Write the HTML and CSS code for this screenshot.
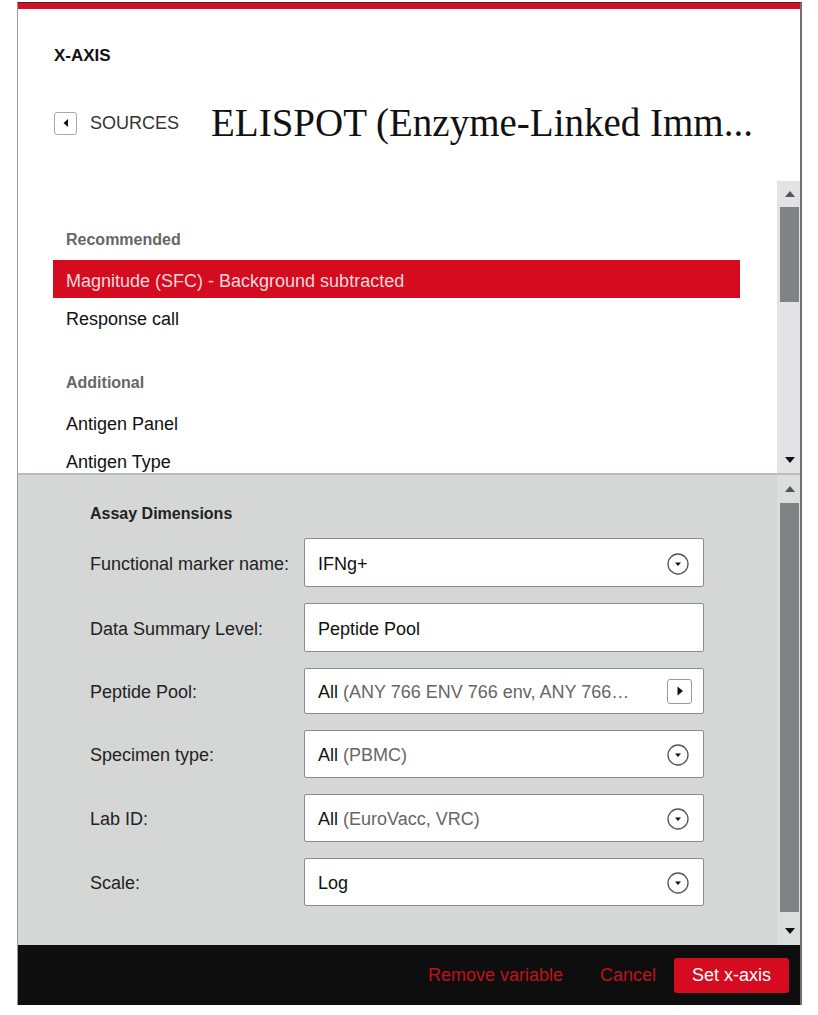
FILE: index.html
```html
<!DOCTYPE html>
<html>
<head>
<meta charset="utf-8">
<link rel="stylesheet" href="styles.css">
</head>
<body>
<div class="modal">
  <div class="redbar"></div>
  <div class="header">
    <div class="axis-title">X-AXIS</div>
    <div class="crumbs">
      <div class="back">
        <span class="backbox"><svg width="8" height="10" viewBox="0 0 8 10"><path d="M6 1 L1.5 5 L6 9 Z" fill="#111"/></svg></span>
        <span class="back-text">SOURCES</span>
      </div>
      <div class="source-title">ELISPOT (Enzyme-Linked Imm...</div>
    </div>
  </div>

  <div class="list-area">
    <div class="list">
      <div class="group">
        <div class="group-title">Recommended</div>
        <div class="item selected">Magnitude (SFC) - Background subtracted</div>
        <div class="item">Response call</div>
      </div>
      <div class="group">
        <div class="group-title">Additional</div>
        <div class="item">Antigen Panel</div>
        <div class="item">Antigen Type</div>
      </div>
    </div>
    <div class="scrollbar sb-upper">
      <div class="sb-btn"><span class="tri-up dim"></span></div>
      <div class="sb-track"><div class="sb-thumb"></div></div>
      <div class="sb-btn"><span class="tri-down"></span></div>
    </div>
  </div>

  <div class="dims-area">
    <div class="dims">
      <div class="dims-title">Assay Dimensions</div>
      <div class="form">
        <div class="label">Functional marker name:</div>
        <div class="field h49"><span class="val">IFNg+</span><span class="circ"><svg width="22" height="22" viewBox="0 0 22 22"><circle cx="11" cy="11" r="10" fill="none" stroke="#555" stroke-width="1.3"/><path d="M8 9.5 L14 9.5 L11 13 Z" fill="#111"/></svg></span></div>

        <div class="label">Data Summary Level:</div>
        <div class="field h49"><span class="val">Peptide Pool</span></div>

        <div class="label">Peptide Pool:</div>
        <div class="field h46"><span class="val">All <span class="muted">(ANY 766 ENV 766 env, ANY 766…</span></span><span class="sqbtn"><svg width="10" height="12" viewBox="0 0 10 12"><path d="M2.5 1.5 L8 6 L2.5 10.5 Z" fill="#111"/></svg></span></div>

        <div class="label">Specimen type:</div>
        <div class="field"><span class="val">All <span class="muted">(PBMC)</span></span><span class="circ"><svg width="22" height="22" viewBox="0 0 22 22"><circle cx="11" cy="11" r="10" fill="none" stroke="#555" stroke-width="1.3"/><path d="M8 9.5 L14 9.5 L11 13 Z" fill="#111"/></svg></span></div>

        <div class="label">Lab ID:</div>
        <div class="field"><span class="val">All <span class="muted">(EuroVacc, VRC)</span></span><span class="circ"><svg width="22" height="22" viewBox="0 0 22 22"><circle cx="11" cy="11" r="10" fill="none" stroke="#555" stroke-width="1.3"/><path d="M8 9.5 L14 9.5 L11 13 Z" fill="#111"/></svg></span></div>

        <div class="label">Scale:</div>
        <div class="field"><span class="val">Log</span><span class="circ"><svg width="22" height="22" viewBox="0 0 22 22"><circle cx="11" cy="11" r="10" fill="none" stroke="#555" stroke-width="1.3"/><path d="M8 9.5 L14 9.5 L11 13 Z" fill="#111"/></svg></span></div>
      </div>
    </div>
    <div class="scrollbar sb-lower">
      <div class="sb-btn"><span class="tri-up dim"></span></div>
      <div class="sb-track"><div class="sb-thumb"></div></div>
      <div class="sb-btn"><span class="tri-down"></span></div>
    </div>
  </div>

  <div class="footer">
    <span class="link">Remove variable</span>
    <span class="link cancel">Cancel</span>
    <span class="primary">Set x-axis</span>
  </div>
</div>
</body>
</html>
```

FILE: styles.css
```css
* { box-sizing: border-box; }
html, body { margin: 0; padding: 0; background: #fff; }
body {
  font-family: "Liberation Sans", Arial, sans-serif;
  color: #111;
}
.modal {
  margin: 2px 0 0 17px;
  width: 785px;
  border-top: 1px solid #333;
  border-left: 1px solid #999;
  border-right: 2px solid #707070;
  display: flex;
  flex-direction: column;
}
.redbar { height: 6px; background: #d50f25; }
.header {
  height: 172px;
  padding: 37px 0 0 36px;
  background: #fff;
}
.axis-title {
  font-size: 17px;
  font-weight: bold;
  line-height: 20px;
  color: #111;
}
.crumbs {
  margin-top: 35px;
  height: 44px;
  display: flex;
  align-items: center;
}
.back { display: flex; align-items: center; }
.backbox {
  width: 23px; height: 23px;
  border: 1px solid #a8a8a8;
  border-radius: 3px;
  display: flex; align-items: center; justify-content: center;
  background: #fff;
}
.back-text {
  margin-left: 13px;
  font-size: 18px;
  color: #333;
  padding-top: 1px;
}
.source-title {
  margin-left: 32px;
  font-family: "Liberation Serif", "Times New Roman", serif;
  font-size: 39px;
  line-height: 44px;
  color: #111;
  white-space: nowrap;
}
.list-area {
  height: 292px;
  display: flex;
  background: #fff;
  overflow: hidden;
}
.list {
  flex: 1;
  padding: 47px 37px 0 35px;
  overflow: hidden;
}
.group + .group { margin-top: 35px; }
.group-title {
  font-size: 16px;
  font-weight: bold;
  color: #666;
  line-height: 20px;
  padding: 2px 0 0 13px;
  margin-bottom: 10px;
}
.item {
  height: 38px;
  line-height: 38px;
  font-size: 18px;
  padding: 2px 0 0 13px;
  color: #111;
  overflow: visible;
}
.item.selected {
  background: #d50b1f;
  color: #f6d9dc;
}
.scrollbar {
  width: 23px;
  display: flex;
  flex-direction: column;
}
.sb-upper { background: #e3e3e5; }
.sb-lower { background: #dcdddd; }
.sb-btn {
  height: 26px;
  display: flex; align-items: center; justify-content: center;
  padding-left: 2px;
}
.sb-lower .sb-btn { height: 28px; }
.sb-track { flex: 1; padding: 0 1px 0 3px; }
.sb-thumb { background: #808285; }
.sb-upper .sb-thumb { height: 95px; }
.sb-lower .sb-thumb { height: 409px; }
.tri-up, .tri-down {
  width: 0; height: 0;
  border-left: 5px solid transparent;
  border-right: 5px solid transparent;
}
.tri-up { border-bottom: 6px solid #111; }
.tri-down { border-top: 6px solid #111; }
.tri-up.dim { border-bottom-color: #555; }
.dims-area {
  height: 472px;
  display: flex;
  background: #d5d6d6;
  border-top: 2px solid #bcbcbc;
}
.dims {
  flex: 1;
  padding: 29px 0 0 72px;
}
.dims-title {
  font-size: 16px;
  font-weight: bold;
  color: #222;
  line-height: 20px;
  margin-bottom: 14px;
}
.form {
  display: grid;
  grid-template-columns: 214px 400px;
  row-gap: 16px;
  align-items: center;
}
.label {
  font-size: 18px;
  color: #222;
  padding-top: 3px;
}
.field {
  height: 48px;
  background: #fff;
  border: 1px solid #8c8c8c;
  border-radius: 2px;
  display: flex;
  align-items: center;
  justify-content: space-between;
  padding: 0 11px 0 13px;
  font-size: 18px;
  color: #111;
}
.val { white-space: nowrap; padding-top: 3px; }
.field.h49 { height: 49px; }
.field.h46 { height: 46px; }
.muted { color: #666; }
.circ {
  display: flex;
  margin-right: 3px;
  margin-top: 2px;
}
.sqbtn {
  width: 25px; height: 25px;
  border: 1px solid #9a9a9a;
  border-radius: 3px;
  display: flex; align-items: center; justify-content: center;
  background: #fff;
}
.footer {
  height: 60px;
  background: #0e0e0e;
  display: flex;
  align-items: center;
  justify-content: flex-end;
  padding-right: 11px;
}
.link {
  font-size: 18px;
  color: #c0111f;
  padding-top: 1px;
}
.cancel { margin-left: 37px; margin-right: 18px; }
.primary {
  width: 115px;
  height: 35px;
  background: #d50b1f;
  color: #fff;
  font-size: 18px;
  border-radius: 3px;
  display: flex; align-items: center; justify-content: center;
  padding-top: 1px;
}
```
